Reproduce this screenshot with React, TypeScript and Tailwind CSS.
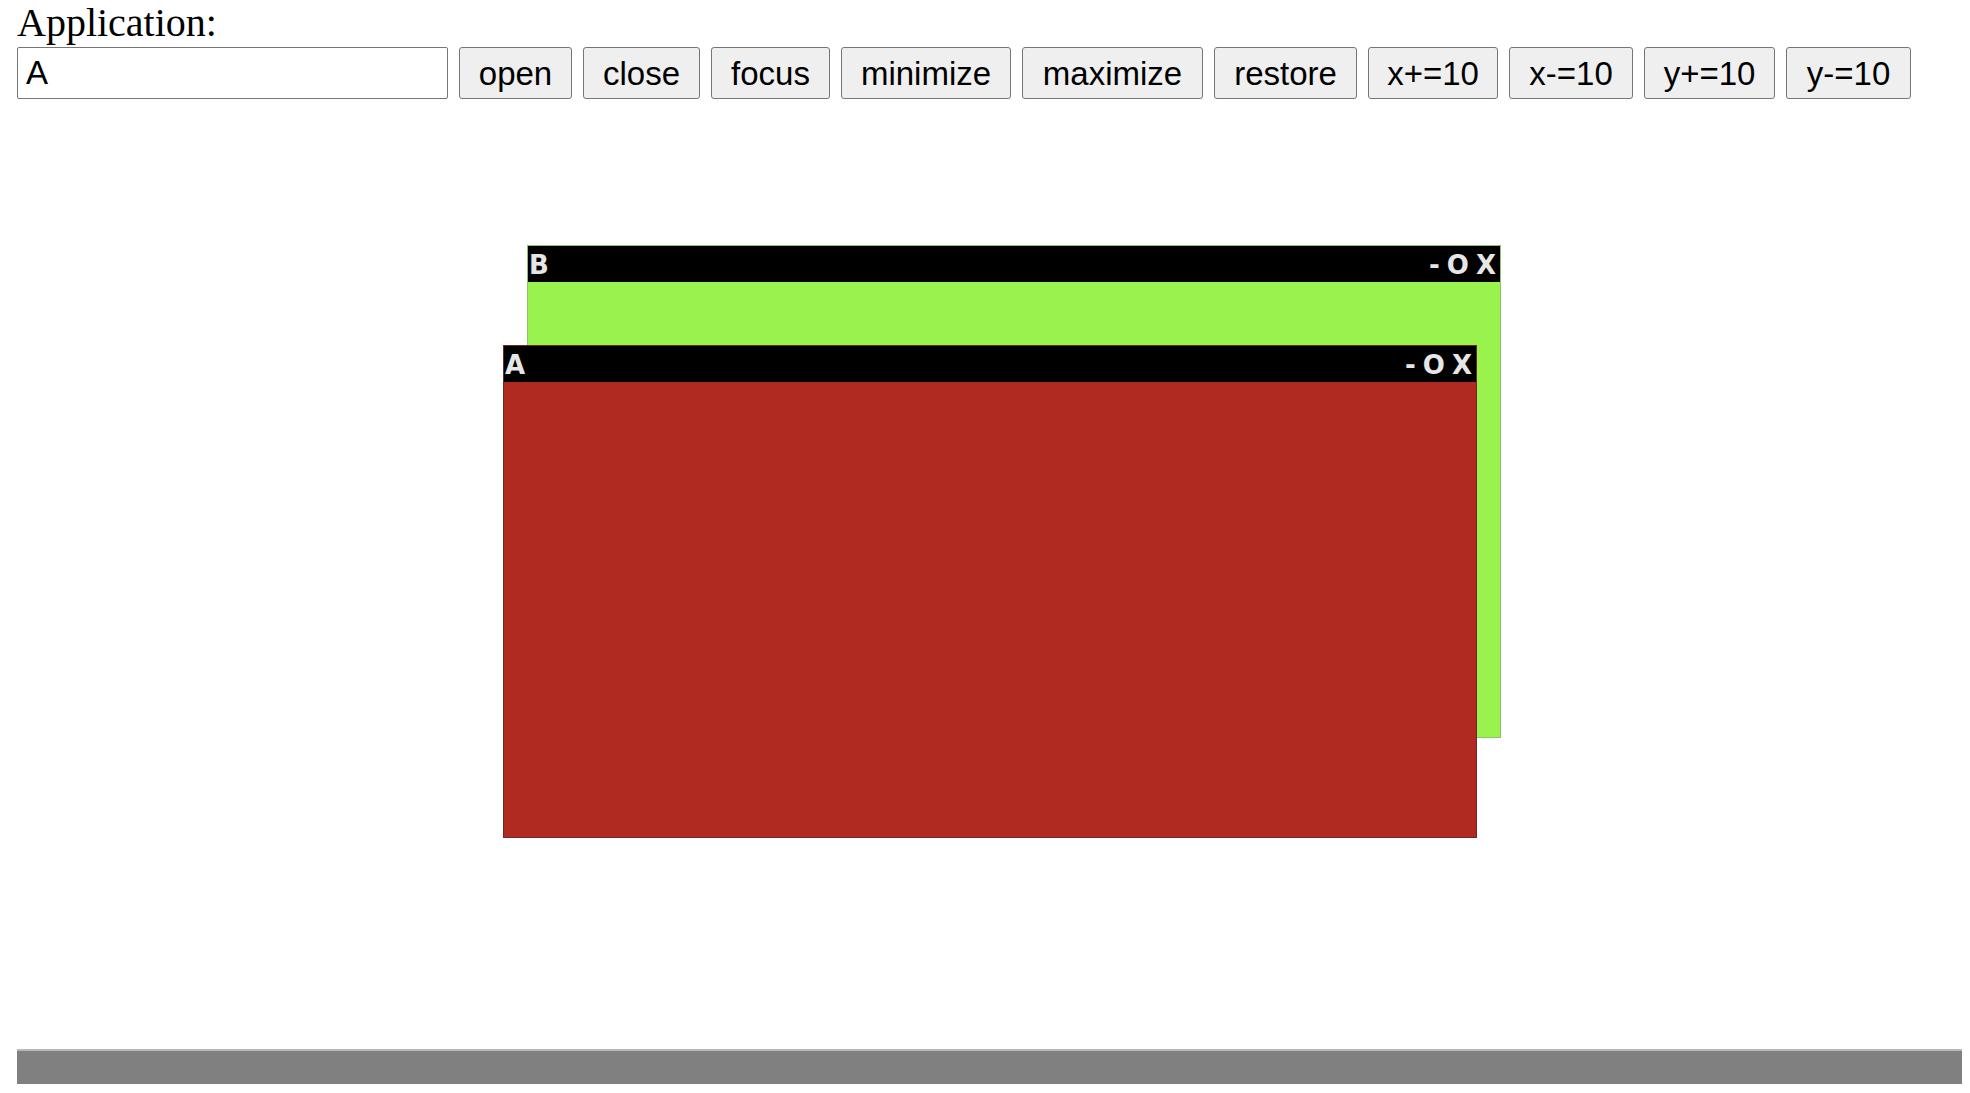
const buttons: { label: string; w: string }[] = [
  { label: "open", w: "w-[113px]" },
  { label: "close", w: "w-[117px]" },
  { label: "focus", w: "w-[119px]" },
  { label: "minimize", w: "w-[170px]" },
  { label: "maximize", w: "w-[181px]" },
  { label: "restore", w: "w-[143px]" },
  { label: "x+=10", w: "w-[130px]" },
  { label: "x-=10", w: "w-[124px]" },
  { label: "y+=10", w: "w-[131px]" },
  { label: "y-=10", w: "w-[125px]" },
];

function Win({
  title,
  body,
  pos,
}: {
  title: string;
  body: string;
  pos: string;
}) {
  return (
    <div className={`absolute ${pos} w-[974px] h-[493px] flex flex-col ${body}`}>
      {/* title bar */}
      <div className="h-[36px] bg-black flex items-center justify-between font-['DejaVu_Sans',sans-serif] font-bold text-[26px] text-[#e6e6e6] leading-none pt-[2px]">
        <span className="pl-[1px]">{title}</span>
        <span className="flex items-center gap-[7px] pr-[4px]">
          <span>-</span>
          <span>O</span>
          <span>X</span>
        </span>
      </div>
      <div className="flex-1" />
    </div>
  );
}

export default function App() {
  return (
    <div className="w-[1970px] h-[1093px] bg-white pl-[17px] pr-[8px] flex flex-col">
      {/* label */}
      <div className="h-[47px] font-['Liberation_Serif',serif] text-[40px] leading-[46px] text-black">
        Application:
      </div>

      {/* controls */}
      <div className="flex gap-[11px] h-[52px] font-['Liberation_Sans',Arial,sans-serif] text-[33px] text-black">
        <input
          defaultValue="A"
          className="w-[431px] h-[52px] border border-[#767676] rounded-[2px] px-[8px] outline-none bg-white"
        />
        {buttons.map((b) => (
          <button
            key={b.label}
            className={`${b.w} h-[52px] border border-[#767676] rounded-[3px] bg-[#efefef] flex items-center justify-center leading-none`}
          >
            {b.label}
          </button>
        ))}
      </div>

      {/* desktop */}
      <div className="relative h-[950px]">
        <Win title="B" body="bg-[#9af34c] border border-[#8fbf70]" pos="left-[510px] top-[146px]" />
        <Win title="A" body="bg-[#b02a21] border border-[#6b2a22]" pos="left-[486px] top-[246px]" />
      </div>

      {/* taskbar */}
      <div className="h-[35px] bg-[#808080] border-t-2 border-[#b8b8b8]" />
    </div>
  );
}
